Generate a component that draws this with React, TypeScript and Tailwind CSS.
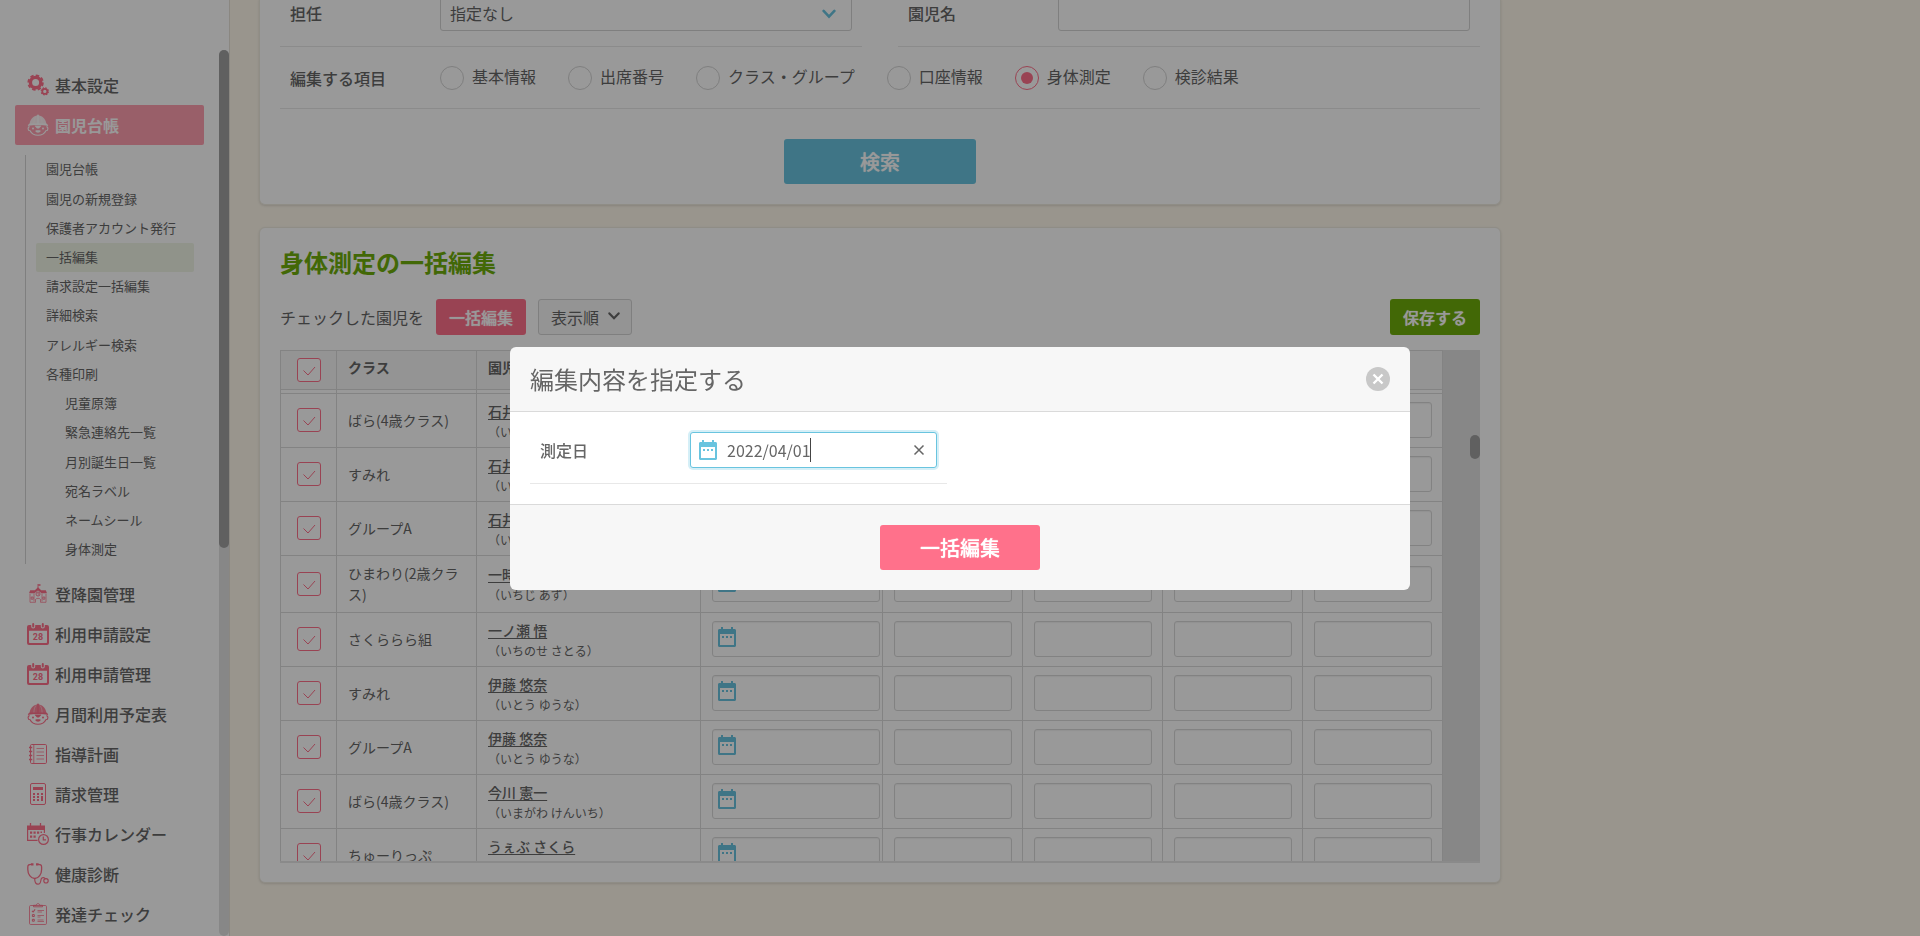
import React, { useState } from "react";

type IconProps = { className?: string };

const GearsIcon = ({ className }: IconProps) => (
  <svg viewBox="0 0 22 22" className={className} fill="none" stroke="currentColor" aria-hidden="true">
    <circle cx="8.6" cy="8.6" r="5.2" strokeWidth="3.4" />
    <circle cx="8.6" cy="8.6" r="7.3" strokeWidth="1.8" strokeDasharray="3.5 2.23" />
    <circle cx="17.8" cy="17.4" r="2.5" strokeWidth="1.7" />
    <circle cx="17.8" cy="17.4" r="3.6" strokeWidth="1.1" strokeDasharray="1.6 1.23" />
  </svg>
);

const BearIcon = ({ className }: IconProps) => (
  <svg viewBox="0 0 22 22" className={className} aria-hidden="true">
    <path
      d="M2.6 10.2C3 5.6 5.800 2.300 9.800 1.500 10 .3 12 .3 12.200 1.500 16.200 2.300 19 5.600 19.400 10.200z"
      fill="currentColor"
      fillOpacity=".85"
    />
    <path d="M11 1.500v8.500" stroke="currentColor" strokeWidth="1.400" fill="none" />
    <path
      d="M8.900 2.500C7.400 4.500 6.900 7 6.900 10M13.100 2.500c1.500 2 2 4.500 2 7.500"
      stroke="#fff"
      strokeOpacity=".6"
      strokeWidth=".7"
      fill="none"
    />
    <path d="M.8 11.900c.3-1.300 1.200-2 2.200-2.300h16c1 .3 1.900 1 2.200 2.300-3-.7-6.600-1-10.200-1s-7.200.3-10.200 1z" fill="currentColor" />
    <path
      d="M2.600 12.600c-2 .2-2.200 4 .5 4.200 1.300 2.800 4.400 4.500 7.900 4.500s6.600-1.700 7.900-4.500c2.700-.2 2.500-4 .5-4.200"
      stroke="currentColor"
      strokeWidth="1.100"
      fill="none"
    />
    <circle cx="6" cy="14.600" r="1" fill="currentColor" />
    <circle cx="16" cy="14.600" r="1" fill="currentColor" />
    <path d="M7.600 11.600h6.800c-.2 1.200-1.200 1.700-1.900 2.300-.9.700-2.100.7-3 0-.7-.6-1.700-1.100-1.900-2.300z" fill="currentColor" />
    <path d="M8.200 16.800c1.700-.6 3.900-.6 5.600 0-.5 1.500-1.600 1.900-2.800 1.900s-2.300-.4-2.800-1.900z" fill="currentColor" />
  </svg>
);

const SchoolIcon = ({ className }: IconProps) => (
  <svg viewBox="0 0 22 22" className={className} fill="none" stroke="currentColor" aria-hidden="true">
    <path d="M11 1v6" strokeWidth=".9" />
    <path d="M11.200 1.200h2.300v1.600h-2.300z" fill="currentColor" stroke="none" />
    <path d="M2 10.200 3.200 7.200h4.600L11 4.200l3.200 3h4.600l1.200 3h-5.400L11 7.400l-3.600 2.800z" fill="currentColor" stroke="none" />
    <path d="M3 11v8.300h5.500v-3M19 11v8.300h-5.500v-3M7 10.500v8M15 10.500v8M8.500 16.500c.8-1.600 4.200-1.600 5 0" strokeWidth=".7" />
    <circle cx="11" cy="11" r="2" strokeWidth=".9" />
    <path d="M11 9.800v1.400h.9" strokeWidth=".7" />
    <path d="M4.200 14h1.900v2.200H4.200zM15.900 14h1.900v2.200h-1.900z" strokeWidth=".8" />
  </svg>
);

const Calendar28Icon = ({ className }: IconProps) => (
  <svg viewBox="0 0 22 22" className={className} aria-hidden="true">
    <path
      fillRule="evenodd"
      d="M2 2h2.200v1.400a2 2 0 0 0 4 0V2h5.600v1.400a2 2 0 0 0 4 0V2H20a2 2 0 0 1 2 2v16a2 2 0 0 1-2 2H2a2 2 0 0 1-2-2V4a2 2 0 0 1 2-2zm0 5.800v11.500c0 .5.200.7.700.7h16.600c.5 0 .7-.2.700-.7V7.800z"
      fill="currentColor"
    />
    <rect x="5.200" y="0" width="2" height="4.600" rx="1" fill="currentColor" />
    <rect x="14.800" y="0" width="2" height="4.600" rx="1" fill="currentColor" />
    <text x="11" y="17.400" textAnchor="middle" fontSize="9" fontWeight="700" fontFamily="Roboto, sans-serif" fill="currentColor">
      28
    </text>
  </svg>
);

const NotebookIcon = ({ className }: IconProps) => (
  <svg viewBox="0 0 22 22" className={className} fill="none" stroke="currentColor" aria-hidden="true">
    <rect x="3.500" y="1.500" width="16" height="19" rx="1.200" strokeWidth="1" />
    <path d="M6.800 1.500v19" strokeWidth=".8" />
    <path d="M2 4.500h3.200M2 8.500h3.200M2 12.500h3.200M2 16.500h3.200" strokeWidth="1.600" />
    <path d="M9.500 5.500h7.500M9.500 9h7.500M9.500 12.500h7.500M9.500 16h7.500" strokeWidth=".7" />
  </svg>
);

const CalculatorIcon = ({ className }: IconProps) => (
  <svg viewBox="0 0 22 22" className={className} aria-hidden="true">
    <rect x="3.500" y=".5" width="15" height="21" rx="1.500" stroke="currentColor" fill="none" />
    <path
      fill="currentColor"
      d="M6 4h10v3H6zM6 10h2v2H6zm4 0h2v2h-2zm4 0h2v2h-2zM6 13h2v2H6zm4 0h2v2h-2zm4 0h2v5h-2zM6 16h2v2H6zm4 0h2v2h-2z"
    />
  </svg>
);

const CalendarClockIcon = ({ className }: IconProps) => (
  <svg viewBox="0 0 22 22" className={className} fill="none" stroke="currentColor" aria-hidden="true">
    <path d="M0 2.500h18V7H0z" fill="currentColor" stroke="none" />
    <path d="M3.500 0v4M13.500 0v4" strokeWidth="1.300" />
    <path d="M.6 6v11.400h10M17.400 6v4" strokeWidth="1.200" />
    <path
      d="M3 8.500h2.200v2.200H3zm3.500 0h2.200v2.200H6.500zm3.500 0h2.200v2.200H10zm3.500 0h1.500v1.500h-1.500zM3 12.500h2.200v2.200H3zm3.500 0h2.200v2.200H6.500z"
      fill="currentColor"
      stroke="none"
    />
    <circle cx="16.500" cy="16.500" r="4.900" strokeWidth="1.200" />
    <path d="M16.300 13.500v3.300H19" strokeWidth="1.200" />
  </svg>
);

const StethoscopeIcon = ({ className }: IconProps) => (
  <svg viewBox="0 0 22 22" className={className} fill="none" stroke="currentColor" aria-hidden="true">
    <path d="M4.500 1.400C2 1.300.8 2 .8 4v2.500c0 4.500 2.800 9 6.900 9s6.900-4.500 6.900-9V4c0-2-1.200-2.700-3.700-2.600" strokeWidth="1.300" />
    <path d="M4 1.300h2.500M9 1.300h2.500" strokeWidth="2.200" />
    <path d="M7.700 15.500c0 3.600 1 5.700 3.300 5.700 3 0 2.600-3.500 3.200-5.200.7-2 3.400-1.500 4.300 0" strokeWidth="1.200" />
    <circle cx="19" cy="17.800" r="2.200" strokeWidth="1.200" />
  </svg>
);

const ChecklistIcon = ({ className }: IconProps) => (
  <svg viewBox="0 0 22 22" className={className} fill="none" stroke="currentColor" aria-hidden="true">
    <rect x="2.500" y="2.500" width="17" height="19" rx="1.200" strokeWidth=".8" />
    <path d="M6.500 3.800V2.300h2.700c.4-2.200 3.200-2.200 3.600 0h2.700v1.500z" strokeWidth=".9" />
    <path d="m5 7.800 1.100 1.200 2-2.600" strokeWidth="1.100" />
    <path d="M10.500 7.500H17M10.500 9H15M10.500 12.500H17M10.500 14h3M10.500 17h6M10.500 18.500H17" strokeWidth=".7" />
    <path d="M5.400 11.600h1.900v1.900H5.400zM5.400 16.300h1.900v1.900H5.400z" strokeWidth="1" />
  </svg>
);

const DateIcon = ({ className }: IconProps) => (
  <svg viewBox="0 0 18 20" className={className} fill="currentColor" aria-hidden="true">
    <path
      fillRule="evenodd"
      d="M3 0h2v2h8V0h2v2h1.500c.9 0 1.500.6 1.500 1.500v15c0 .9-.6 1.500-1.500 1.500h-15C.6 20 0 19.400 0 18.500v-15C0 2.600.6 2 1.500 2H3zM2 7v11h14V7z"
    />
    <path d="M4 9h2v2H4zm4 0h2v2H8zm4 0h2v2h-2z" />
  </svg>
);

const Chevron = ({ className }: IconProps) => (
  <svg viewBox="0 0 12 8" className={className} fill="none" stroke="currentColor" strokeWidth="2.200" strokeLinecap="round" aria-hidden="true">
    <path d="m1.400 1.400 4.600 4.800 4.600-4.800" />
  </svg>
);

type MenuItem = { label: string; icon: (p: IconProps) => React.JSX.Element };

const lowerMenu: MenuItem[] = [
  { label: "登降園管理", icon: SchoolIcon },
  { label: "利用申請設定", icon: Calendar28Icon },
  { label: "利用申請管理", icon: Calendar28Icon },
  { label: "月間利用予定表", icon: BearIcon },
  { label: "指導計画", icon: NotebookIcon },
  { label: "請求管理", icon: CalculatorIcon },
  { label: "行事カレンダー", icon: CalendarClockIcon },
  { label: "健康診断", icon: StethoscopeIcon },
  { label: "発達チェック", icon: ChecklistIcon },
];

const subMenu = [
  "園児台帳",
  "園児の新規登録",
  "保護者アカウント発行",
  "一括編集",
  "請求設定一括編集",
  "詳細検索",
  "アレルギー検索",
  "各種印刷",
];

const printMenu = ["児童原簿", "緊急連絡先一覧", "月別誕生日一覧", "宛名ラベル", "ネームシール", "身体測定"];

function MenuLink({ item, active = false }: { item: MenuItem; active?: boolean }) {
  const Icon = item.icon;
  return (
    <a
      href="#"
      className={
        active
          ? "flex h-10 shrink-0 items-center gap-1.5 rounded-xs bg-[#ff9fb0] pl-3 font-bold text-white"
          : "flex h-10 shrink-0 items-center gap-1.5 pl-3 font-medium"
      }
    >
      <Icon className={active ? "size-[22px]" : "size-[22px] text-[#ff718b]"} />
      {item.label}
    </a>
  );
}

function Sidebar() {
  return (
    <aside className="flex h-full w-[230px] shrink-0 border-r border-[#e6e2d8] bg-white pt-[50px]">
      <nav className="flex min-w-0 flex-1 flex-col overflow-hidden px-[15px] pt-[15px]">
        <MenuLink item={{ label: "基本設定", icon: GearsIcon }} />
        <MenuLink item={{ label: "園児台帳", icon: BearIcon }} active />
        <ul className="m-2.5 flex h-[409px] shrink-0 flex-col border-l border-[#d4d4d4] pl-2.5 text-[13px]">
          {subMenu.map((label) => (
            <li key={label} className="flex flex-1">
              <a
                href="#"
                className={
                  label === "一括編集"
                    ? "flex flex-1 items-center rounded-xs bg-[#f0f6e6] pb-px pl-2.5"
                    : "flex flex-1 items-center pb-px pl-2.5"
                }
              >
                {label}
              </a>
            </li>
          ))}
          {printMenu.map((label) => (
            <li key={label} className="flex flex-1">
              <a href="#" className="flex flex-1 items-center pb-px pl-[29px]">
                {label}
              </a>
            </li>
          ))}
        </ul>
        {lowerMenu.map((item) => (
          <MenuLink key={item.label} item={item} />
        ))}
      </nav>
      <div className="w-2.5 rounded-full bg-[#e2e2e2]">
        <div className="h-[498px] rounded-full bg-[#a0a0a0]" />
      </div>
    </aside>
  );
}

const editTargets = ["基本情報", "出席番号", "クラス・グループ", "口座情報", "身体測定", "検診結果"];

function SearchCard() {
  const [target, setTarget] = useState("身体測定");
  return (
    <section className="rounded-md border border-t-0 border-[#efebe0] bg-white px-5 pb-5 shadow-sm">
      <div className="flex gap-9">
        <div className="flex flex-1 items-center border-b border-[#e8e8e8] px-2.5 pb-[15px]">
          <label htmlFor="teacher" className="w-[150px] font-medium">
            担任
          </label>
          <div className="relative flex-1">
            <select id="teacher" className="h-9 w-full appearance-none rounded-[3px] border border-[#d4d4d4] bg-white pl-[9px]">
              <option>指定なし</option>
            </select>
            <Chevron className="pointer-events-none absolute top-3.5 right-4 h-2.5 w-3.5 text-[#69c4df]" />
          </div>
        </div>
        <div className="flex flex-1 items-center border-b border-[#e8e8e8] px-2.5 pb-[15px]">
          <label htmlFor="child" className="w-[150px] font-medium">
            園児名
          </label>
          <input id="child" type="text" className="h-9 min-w-0 flex-1 rounded-[3px] border border-[#d4d4d4] bg-white px-2" />
        </div>
      </div>
      <div
        role="radiogroup"
        aria-labelledby="target-label"
        className="flex h-[62px] items-center border-b border-[#e8e8e8] px-2.5"
      >
        <span id="target-label" className="w-[150px] font-medium">
          編集する項目
        </span>
        <div className="flex gap-8">
          {editTargets.map((name) => (
            <label key={name} className="flex items-center gap-2">
              <input
                type="radio"
                name="target"
                checked={target === name}
                onChange={() => setTarget(name)}
                className="size-6 appearance-none rounded-full border border-[#d4d4d4] bg-white checked:border-[#ff718b] checked:bg-[#ff718b] checked:bg-clip-content checked:p-[5px]"
              />
              <span className="pb-[3px] leading-5">{name}</span>
            </label>
          ))}
        </div>
      </div>
      <div className="mt-[30px] flex justify-center">
        <button
          type="button"
          className="h-[45px] w-48 rounded-[3px] bg-[#69c4df] text-xl font-medium text-white [text-shadow:0_0_1px_currentColor]"
        >
          検索
        </button>
      </div>
    </section>
  );
}

type Child = { cls: string; name: string; kana: string };

const children: Child[] = [
  { cls: "ばら(4歳クラス)", name: "石井 郁", kana: "いしい いく" },
  { cls: "すみれ", name: "石井 郁", kana: "いしい いく" },
  { cls: "グループA", name: "石井 郁", kana: "いしい いく" },
  { cls: "ひまわり(2歳クラス)", name: "一時 あず", kana: "いちじ あず" },
  { cls: "さくららら組", name: "一ノ瀬 悟", kana: "いちのせ さとる" },
  { cls: "すみれ", name: "伊藤 悠奈", kana: "いとう ゆうな" },
  { cls: "グループA", name: "伊藤 悠奈", kana: "いとう ゆうな" },
  { cls: "ばら(4歳クラス)", name: "今川 憲一", kana: "いまがわ けんいち" },
  { cls: "ちゅーりっぷ", name: "うぇぶ さくら", kana: "うぇぶ さくら" },
];

const measures = ["身長", "体重", "頭囲", "胸囲"];

function CheckBox({ label }: { label: string }) {
  return (
    <span className="relative mx-auto block size-6">
      <input
        type="checkbox"
        defaultChecked
        aria-label={label}
        className="peer block size-6 appearance-none rounded-[3px] border border-[#ff718b] bg-white"
      />
      <svg
        viewBox="0 0 24 24"
        className="pointer-events-none absolute inset-0 hidden size-6 text-[#ff718b] peer-checked:block"
        fill="none"
        stroke="currentColor"
        aria-hidden="true"
      >
        <path d="m6.500 12.500 4.500 4.500 7-8" />
      </svg>
    </span>
  );
}

function ChildTable() {
  const line = "border-r border-b border-[#dadada]";
  const field = "block h-9 w-full rounded-[3px] border border-[#d9d9d9] bg-white inset-shadow-xs";
  return (
    <div className="mt-[15px] flex h-[513px] overflow-hidden border-b-2 border-[#e6e6e6]">
      <div className="min-w-0 flex-1">
        <table className="w-full table-fixed border-separate border-spacing-0 border-t border-l border-[#dadada] text-sm leading-[21px]">
          <colgroup>
            <col className="w-14" />
            <col className="w-[140px]" />
            <col className="w-56" />
            <col className="w-[182px]" />
            <col />
            <col />
            <col />
            <col />
          </colgroup>
          <thead>
            <tr className="h-[39px] bg-[#f7f7f7] text-left">
              <th className={`${line} p-0`}>
                <CheckBox label="すべて選択" />
              </th>
              <th className={`${line} pt-0 pr-0 pb-1.5 pl-[11px]`}>クラス</th>
              <th className={`${line} pt-0 pr-0 pb-1.5 pl-[11px]`}>園児名</th>
              <th className={`${line} pt-0 pr-0 pb-1.5 pl-[11px]`}>測定日</th>
              {measures.map((m) => (
                <th key={m} className={`${line} pt-0 pr-0 pb-1.5 pl-[11px]`}>
                  {m}
                </th>
              ))}
            </tr>
          </thead>
          <tbody>
            <tr className="h-1" aria-hidden="true">
              {Array.from({ length: 8 }, (_, i) => (
                <td key={i} className={`${line} p-0`} />
              ))}
            </tr>
            {children.map((c, i) => (
              <tr key={i} className="h-[54px]">
                <td className={`${line} px-0 pt-0 pb-px`}>
                  <CheckBox label={`${c.name}を選択`} />
                </td>
                <td className={`${line} py-[7px] pr-2.5 pl-[11px]`}>{c.cls}</td>
                <td className={`${line} py-0 pr-0 pl-[11px]`}>
                  <a href="#" className="block w-fit font-medium leading-5 underline underline-offset-2">
                    {c.name}
                  </a>
                  <span className="mt-0.5 block text-xs leading-[18px]">（{c.kana}）</span>
                </td>
                <td className={`${line} pt-0 pr-0.5 pb-px pl-[11px]`}>
                  <div className="relative">
                    <input type="text" aria-label="測定日" className={`${field} pl-9`} />
                    <DateIcon className="pointer-events-none absolute top-1.5 left-1.5 h-5 w-[18px] text-[#69c4df]" />
                  </div>
                </td>
                {measures.map((m) => (
                  <td key={m} className={`${line} pt-0 pr-2.5 pb-px pl-[11px]`}>
                    <input type="text" aria-label={m} className={`${field} px-2`} />
                  </td>
                ))}
              </tr>
            ))}
          </tbody>
        </table>
      </div>
      <div className="flex w-[37px] justify-end bg-[#e2e2e2] pt-[85px]">
        <div className="h-6 w-2.5 rounded-full bg-[#a0a0a0]" />
      </div>
    </div>
  );
}

function EditCard() {
  return (
    <section className="mt-[22px] rounded-md border border-[#efebe0] bg-white px-5 pt-4 pb-[19px] shadow-sm">
      <h2 className="text-2xl leading-9 font-bold text-[#6eae0a]">身体測定の一括編集</h2>
      <div className="mt-[19px] flex items-center">
        <span>チェックした園児を</span>
        <button
          type="button"
          className="ml-3 h-9 w-[90px] rounded-[3px] bg-[#ff718b] font-medium text-white [text-shadow:0_0_1px_currentColor]"
        >
          一括編集
        </button>
        <button
          type="button"
          className="ml-3 flex h-9 w-[94px] items-center justify-between rounded-[3px] border border-[#d4d4d4] bg-[#f7f7f7] pr-[11px] pl-3"
        >
          表示順
          <Chevron className="mb-0.5 h-2 w-3" />
        </button>
        <button
          type="button"
          className="ml-auto h-9 w-[90px] rounded-[3px] bg-[#6eae0a] font-medium text-white [text-shadow:0_0_1px_currentColor]"
        >
          保存する
        </button>
      </div>
      <ChildTable />
    </section>
  );
}

function EditDialog() {
  const [date, setDate] = useState("2022/04/01");
  return (
    <div className="fixed inset-0 flex items-center justify-center bg-black/40">
      <div
        role="dialog"
        aria-modal="true"
        aria-labelledby="dialog-title"
        className="w-full max-w-[900px] overflow-hidden rounded-md bg-[#f7f7f7]"
      >
        <div className="flex h-16 items-center justify-between px-5">
          <h2 id="dialog-title" className="text-2xl">
            編集内容を指定する
          </h2>
          <button
            type="button"
            aria-label="閉じる"
            className="flex size-6 items-center justify-center rounded-full bg-[#c8c8c8] text-white"
          >
            <svg viewBox="0 0 12 12" className="size-3" stroke="currentColor" strokeWidth="2.400" aria-hidden="true">
              <path d="m1.500 1.500 9 9m0-9-9 9" />
            </svg>
          </button>
        </div>
        <div className="border-y border-[#dadada] bg-white p-5">
          <div className="flex w-[417px] items-center border-b border-[#e8e8e8] pr-2.5 pb-[15px] pl-2.5">
            <label htmlFor="measured-on" className="w-[150px] font-medium">
              測定日
            </label>
            <div className="relative min-w-0 flex-1">
              <input
                id="measured-on"
                type="text"
                value={date}
                onChange={(e) => setDate(e.target.value)}
                className="block h-9 w-full rounded-[3px] border border-[#69c4df] bg-white pr-8 pl-9 caret-transparent ring-2 ring-[#d5eff7] outline-none"
              />
              <DateIcon className="pointer-events-none absolute top-2 left-[9px] h-5 w-[18px] text-[#69c4df]" />
              <span aria-hidden="true" className="pointer-events-none absolute top-1.5 left-[120px] h-6 w-px bg-[#444]" />
              <button type="button" aria-label="クリア" className="absolute top-3 right-3 size-3">
                <svg viewBox="0 0 12 12" className="size-3" stroke="currentColor" strokeWidth="1.500" aria-hidden="true">
                  <path d="m1.500 1.500 9 9m0-9-9 9" />
                </svg>
              </button>
            </div>
          </div>
        </div>
        <div className="flex justify-center py-5">
          <button
            type="button"
            className="h-[45px] w-40 rounded-[3px] bg-[#ff718b] pt-0.5 text-xl font-medium text-white [text-shadow:0_0_1px_currentColor]"
          >
            一括編集
          </button>
        </div>
      </div>
    </div>
  );
}

export default function App() {
  return (
    <div className="flex h-screen overflow-hidden bg-[#fff9ec] font-['Noto_Sans_CJK_JP',sans-serif] text-base text-[#666]">
      <Sidebar />
      <main className="min-w-0 flex-1 overflow-hidden pl-[29px]">
        <div className="-mt-[5px] max-w-[1242px]">
          <SearchCard />
          <EditCard />
        </div>
      </main>
      <EditDialog />
    </div>
  );
}
